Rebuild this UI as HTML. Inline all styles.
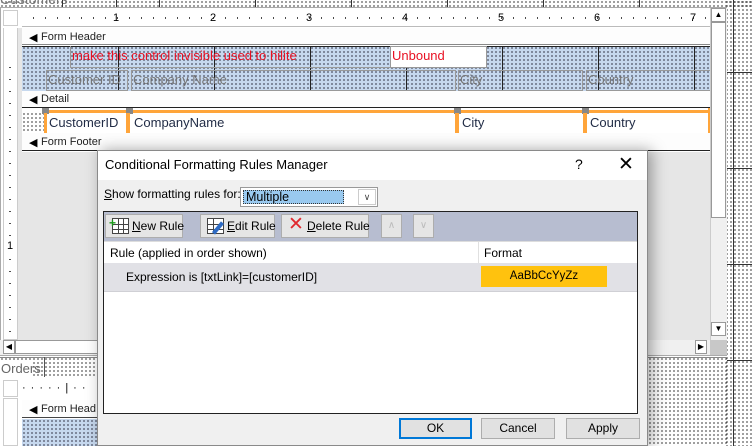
<!DOCTYPE html>
<html><head><meta charset="utf-8"><style>
*{margin:0;padding:0;box-sizing:border-box}
body{width:752px;height:446px;overflow:hidden;position:relative;background:#fff;font-family:"Liberation Sans",sans-serif;font-size:12px;color:#000}
.a{position:absolute}
.dots{background-image:radial-gradient(circle,#222 0.6px,transparent 0.9px);background-size:4px 4px}
.bdots{background-color:#c6d8ee;background-image:radial-gradient(circle,#223 0.6px,transparent 0.9px);background-size:4px 4px}
.t{position:absolute;white-space:nowrap}
.btn{position:absolute;background:#e1e1e1;border:1px solid #adadad;font-size:12px;text-align:center}
.tb{position:absolute;background:#e5e5e5;border:1px solid #adadad;height:24px;top:214px;font-size:12px;line-height:22px;white-space:nowrap}
.tb span{white-space:nowrap}
</style></head><body>
<div class="a dots" style="left:0;top:0;width:752px;height:8px"></div>
<div class="t" style="left:0;top:-9px;font-size:14px;color:#777">Customers</div>
<div class="a" style="left:62px;top:0;width:1px;height:8px;background:#333"></div>
<div class="a" style="left:116px;top:0;width:1px;height:8px;background:#333"></div>
<div class="a" style="left:159px;top:0;width:1px;height:8px;background:#333"></div>
<div class="a" style="left:255px;top:0;width:1px;height:8px;background:#333"></div>
<div class="a" style="left:351px;top:0;width:1px;height:8px;background:#333"></div>
<div class="a" style="left:447px;top:0;width:1px;height:8px;background:#333"></div>
<div class="a" style="left:543px;top:0;width:1px;height:8px;background:#333"></div>
<div class="a" style="left:639px;top:0;width:1px;height:8px;background:#333"></div>
<div class="a dots" style="left:725px;top:0;width:27px;height:446px"></div>
<div class="a" style="left:733px;top:0;width:1px;height:446px;background:#333"></div>
<div class="a" style="left:727px;top:72px;width:25px;height:1px;background:#333"></div>
<div class="a" style="left:727px;top:168px;width:25px;height:1px;background:#333"></div>
<div class="a" style="left:727px;top:264px;width:25px;height:1px;background:#333"></div>
<div class="a" style="left:727px;top:360px;width:25px;height:1px;background:#333"></div>
<div class="a" style="left:0;top:7px;width:727px;height:349px;background:#fff;border:1px solid #aaa"></div>
<div class="a" style="left:3px;top:10px;width:15px;height:16px;border:1px solid #ccc"></div>
<div class="a" style="left:22px;top:10px;width:688px;height:17px;border-bottom:1px solid #bbb"></div>
<div class="t" style="left:113px;top:12px;font-size:11px">1</div>
<div class="t" style="left:210px;top:12px;font-size:11px">2</div>
<div class="t" style="left:306px;top:12px;font-size:11px">3</div>
<div class="t" style="left:402px;top:12px;font-size:11px">4</div>
<div class="t" style="left:498px;top:12px;font-size:11px">5</div>
<div class="t" style="left:594px;top:12px;font-size:11px">6</div>
<div class="t" style="left:690px;top:12px;font-size:11px">7</div>
<div class="a" style="left:22px;top:17px;width:688px;height:2px;background-image:linear-gradient(90deg,transparent 11px,#000 11px,#000 12px,transparent 12px);background-size:12px 2px;opacity:.7"></div>
<div class="a" style="left:3px;top:28px;width:15px;height:312px;border:1px solid #ccc;border-top:none"></div>
<div class="a" style="left:9px;top:56px;width:2px;height:284px;background-image:linear-gradient(transparent 11px,#000 11px,#000 12px,transparent 12px);background-size:2px 12px;opacity:.7"></div>
<div class="t" style="left:7px;top:240px;font-size:11px;background:#fff">1</div>
<div class="a" style="left:18px;top:28px;width:4px;height:312px;background:#e6e6e6"></div>
<div class="a" style="left:22px;top:28px;width:688px;height:17px;background:#fdfdfd;border-bottom:1px solid #888"></div>
<div class="t" style="left:29px;top:31px;font-size:11px">&#9664;</div>
<div class="t" style="left:41px;top:31px;font-size:11px;color:#222">Form Header</div>
<div class="a bdots" style="left:22px;top:46px;width:688px;height:45px"></div>
<div class="a" style="left:22px;top:46px;width:688px;height:1px;background:#222"></div>
<div class="a" style="left:118px;top:46px;width:1px;height:45px;background:#222"></div>
<div class="a" style="left:214px;top:46px;width:1px;height:45px;background:#222"></div>
<div class="a" style="left:310px;top:46px;width:1px;height:45px;background:#222"></div>
<div class="a" style="left:406px;top:46px;width:1px;height:45px;background:#222"></div>
<div class="a" style="left:502px;top:46px;width:1px;height:45px;background:#222"></div>
<div class="a" style="left:598px;top:46px;width:1px;height:45px;background:#222"></div>
<div class="a" style="left:694px;top:46px;width:1px;height:45px;background:#222"></div>
<div class="a" style="left:70px;top:46px;width:321px;height:22px;border:1px solid #999;border-top:none"></div>
<div class="t" style="left:72px;top:48px;font-size:13px;color:#e81123">make this control invisible used to hilite</div>
<div class="a" style="left:390px;top:46px;width:97px;height:22px;background:#fff;border:1px solid #999"></div>
<div class="t" style="left:392px;top:48px;font-size:13px;color:#e81123">Unbound</div>
<div class="a" style="left:46px;top:70px;width:82px;height:21px;border:1px solid #999"></div>
<div class="a" style="left:131px;top:70px;width:325px;height:21px;border:1px solid #999"></div>
<div class="a" style="left:458px;top:70px;width:125px;height:21px;border:1px solid #999"></div>
<div class="a" style="left:586px;top:70px;width:125px;height:21px;border:1px solid #999"></div>
<div class="t" style="left:48px;top:72px;font-size:13px;color:#777">Customer ID</div>
<div class="t" style="left:133px;top:72px;font-size:13px;color:#777">Company Name</div>
<div class="t" style="left:460px;top:72px;font-size:13px;color:#777">City</div>
<div class="t" style="left:588px;top:72px;font-size:13px;color:#777">Country</div>
<div class="a" style="left:22px;top:91px;width:688px;height:17px;background:#fdfdfd;border-bottom:1px solid #222"></div>
<div class="t" style="left:29px;top:93px;font-size:11px">&#9664;</div>
<div class="t" style="left:41px;top:93px;font-size:11px;color:#222">Detail</div>
<div class="a dots" style="left:22px;top:112px;width:22px;height:20px"></div>
<div class="a" style="left:42px;top:110px;width:668px;height:3px;background:#ffa53a"></div>
<div class="a" style="left:42px;top:108px;width:7px;height:6px;background:#888"></div>
<div class="a" style="left:126px;top:108px;width:7px;height:6px;background:#888"></div>
<div class="a" style="left:454px;top:108px;width:7px;height:6px;background:#888"></div>
<div class="a" style="left:582px;top:108px;width:7px;height:6px;background:#888"></div>
<div class="a" style="left:44px;top:113px;width:3px;height:20px;background:#ffa53a"></div>
<div class="a" style="left:126px;top:113px;width:4px;height:20px;background:#ffa53a"></div>
<div class="a" style="left:455px;top:113px;width:4px;height:20px;background:#ffa53a"></div>
<div class="a" style="left:583px;top:113px;width:4px;height:20px;background:#ffa53a"></div>
<div class="a" style="left:708px;top:108px;width:3px;height:25px;background:#ffa53a"></div>
<div class="t" style="left:49px;top:115px;font-size:13px;color:#1f2a44">CustomerID</div>
<div class="t" style="left:134px;top:115px;font-size:13px;color:#1f2a44">CompanyName</div>
<div class="t" style="left:462px;top:115px;font-size:13px;color:#1f2a44">City</div>
<div class="t" style="left:590px;top:115px;font-size:13px;color:#1f2a44">Country</div>
<div class="a" style="left:22px;top:133px;width:688px;height:18px;background:#fdfdfd;border-bottom:1px solid #222"></div>
<div class="t" style="left:29px;top:136px;font-size:11px">&#9664;</div>
<div class="t" style="left:41px;top:136px;font-size:11px;color:#222">Form Footer</div>
<div class="a" style="left:22px;top:152px;width:688px;height:188px;background:#e6e6e6"></div>
<div class="a" style="left:710px;top:8px;width:17px;height:332px;background:#f0f0f0;border-left:1px solid #ccc"></div>
<div class="a" style="left:711px;top:22px;width:15px;height:196px;background:#fff;border:1px solid #999"></div>
<div class="a" style="left:711px;top:8px;width:15px;height:14px;background:#fff;border:1px solid #999;font-size:8px;text-align:center;line-height:12px">&#9650;</div>
<div class="a" style="left:711px;top:322px;width:15px;height:14px;background:#fff;border:1px solid #999;font-size:8px;text-align:center;line-height:12px">&#9660;</div>
<div class="a" style="left:0;top:340px;width:710px;height:15px;background:#f0f0f0"></div>
<div class="a" style="left:3px;top:340px;width:12px;height:14px;background:#fff;border:1px solid #999;font-size:8px;text-align:center;line-height:12px">&#9664;</div>
<div class="a" style="left:15px;top:340px;width:85px;height:14px;background:#fff;border:1px solid #999"></div>
<div class="a" style="left:695px;top:340px;width:12px;height:14px;background:#fff;border:1px solid #999;font-size:8px;text-align:center;line-height:12px">&#9654;</div>
<div class="a" style="left:710px;top:340px;width:17px;height:15px;background:#c8c8c8"></div>
<div class="a dots" style="left:0;top:357px;width:727px;height:89px"></div>
<div class="a" style="left:0;top:357px;width:727px;height:1px;background:#888"></div>
<div class="a" style="left:0;top:360px;width:32px;height:18px;background:#fff"></div>
<div class="t" style="left:1px;top:361px;font-size:13px;color:#666">Orders</div>
<div class="a" style="left:44px;top:357px;width:1px;height:20px;background:#555"></div>
<div class="a" style="left:0;top:378px;width:100px;height:68px;background:#fff"></div>
<div class="a" style="left:3px;top:380px;width:15px;height:17px;border:1px solid #ccc"></div>
<div class="t" style="left:22px;top:382px;font-size:11px;letter-spacing:5px">·····|··</div>
<div class="a" style="left:3px;top:398px;width:15px;height:48px;border:1px solid #ccc"></div>
<div class="a" style="left:22px;top:400px;width:78px;height:18px;background:#fdfdfd;border-bottom:1px solid #444"></div>
<div class="t" style="left:29px;top:403px;font-size:11px">&#9664;</div>
<div class="t" style="left:41px;top:403px;font-size:11px;color:#222">Form Head</div>
<div class="a bdots" style="left:22px;top:419px;width:78px;height:27px"></div>
<div class="a" style="left:97px;top:150px;width:551px;height:296px;box-shadow:4px 0 14px rgba(0,0,0,.35)"></div>
<div class="a" style="left:97px;top:150px;width:551px;height:296px;background:#f0f0f0;border:1px solid #8a8a8a"></div>
<div class="a" style="left:98px;top:151px;width:549px;height:29px;background:#fff"></div>
<div class="t" style="left:105px;top:157px;font-size:13px">Conditional Formatting Rules Manager</div>
<div class="t" style="left:575px;top:156px;font-size:14px">?</div>
<div class="t" style="left:618px;top:153px;font-size:19px;font-weight:300">&#10005;</div>
<div class="t" style="left:104px;top:187px;font-size:12px"><u>S</u>how formatting rules for:</div>
<div class="a" style="left:240px;top:187px;width:138px;height:20px;background:#fff;border:1px solid #999"></div>
<div class="a" style="left:243px;top:190px;width:101px;height:14px;background:#99c9ef;border:1px dotted #333"></div>
<div class="t" style="left:246px;top:190px;font-size:12.5px;color:#000">Multiple</div>
<div class="a" style="left:358px;top:189px;width:18px;height:16px;border:1px solid #ccc;background:#fff;text-align:center;font-size:9px;line-height:14px;color:#444">&#8744;</div>
<div class="a" style="left:103px;top:211px;width:535px;height:203px;background:#fff;border:1px solid #222"></div>
<div class="a" style="left:104px;top:212px;width:533px;height:29px;background:#b7bdd0"></div>
<div class="tb" style="left:105px;width:78px"><span style="position:absolute;left:6px;top:3px;width:17px;height:16px;border:1px solid #444;background:linear-gradient(#444,#444) 0 5px/100% 1px no-repeat,linear-gradient(#444,#444) 0 10px/100% 1px no-repeat,linear-gradient(90deg,#444,#444) 5px 0/1px 100% no-repeat,linear-gradient(90deg,#444,#444) 10px 0/1px 100% no-repeat,#fff"></span><span style="position:absolute;left:3px;top:-3px;color:#1a9a1a;font-size:12px;font-weight:bold">+</span><span style="position:absolute;left:26px"><u>N</u>ew Rule</span></div>
<div class="tb" style="left:200px;width:75px"><span style="position:absolute;left:6px;top:3px;width:17px;height:16px;border:1px solid #444;background:linear-gradient(#444,#444) 0 5px/100% 1px no-repeat,linear-gradient(#444,#444) 0 10px/100% 1px no-repeat,linear-gradient(90deg,#444,#444) 5px 0/1px 100% no-repeat,#fff"></span><span style="position:absolute;left:15px;top:6px;width:4px;height:14px;background:#2e6bc4;transform:rotate(40deg)"></span><span style="position:absolute;left:26px"><u>E</u>dit Rule</span></div>
<div class="tb" style="left:281px;width:88px"><span style="position:absolute;left:6px;top:-1px;color:#e0282e;font-size:19px">&#10005;</span><span style="position:absolute;left:25px"><u>D</u>elete Rule</span></div>
<div class="tb" style="left:381px;width:21px;text-align:center;color:#bbb;font-size:10px">&#8743;</div>
<div class="tb" style="left:413px;width:21px;text-align:center;color:#bbb;font-size:10px">&#8744;</div>
<div class="a" style="left:104px;top:241px;width:533px;height:1px;background:#ddd"></div>
<div class="t" style="left:110px;top:246px;font-size:12px">Rule (applied in order shown)</div>
<div class="a" style="left:478px;top:242px;width:1px;height:21px;background:#e0e0e0"></div>
<div class="t" style="left:484px;top:246px;font-size:12px">Format</div>
<div class="a" style="left:104px;top:263px;width:533px;height:29px;background:#e1e1e6;border-bottom:1px solid #d0d0d5"></div>
<div class="t" style="left:126px;top:270px;font-size:12px">Expression is [txtLink]=[customerID]</div>
<div class="a" style="left:481px;top:266px;width:126px;height:21px;background:#ffc20e;text-align:center;font-size:11.5px;line-height:21px">AaBbCcYyZz</div>
<div class="btn" style="left:399px;top:418px;width:73px;height:21px;border:2px solid #0078d7;line-height:17px">OK</div>
<div class="btn" style="left:481px;top:418px;width:74px;height:21px;line-height:19px">Cancel</div>
<div class="btn" style="left:566px;top:418px;width:74px;height:21px;line-height:19px">Apply</div>
</body></html>
